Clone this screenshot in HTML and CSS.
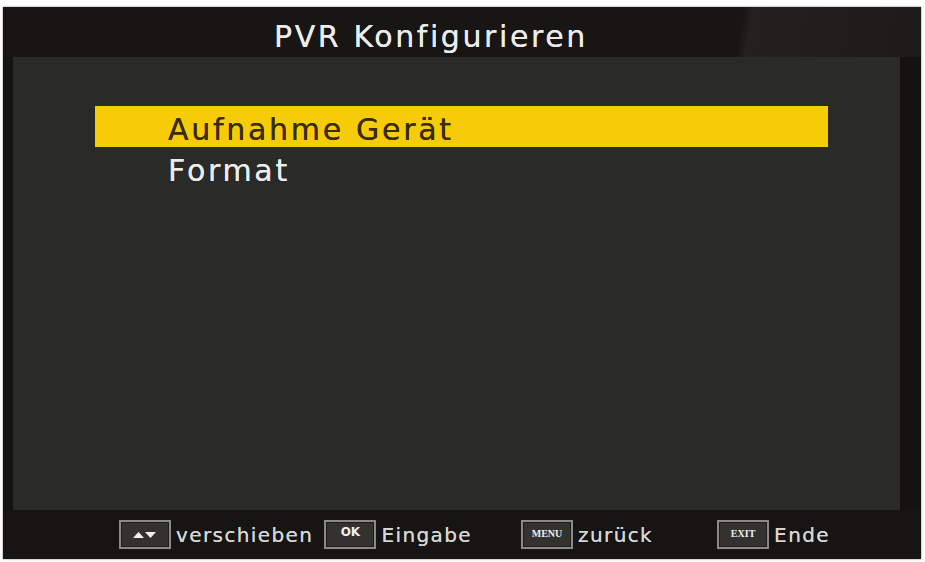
FILE: index.html
```html
<!DOCTYPE html>
<html>
<head>
<meta charset="utf-8">
<link rel="stylesheet" href="styles.css">
</head>
<body>
<div class="frame">
  <div class="header"><span class="title">PVR Konfigurieren</span></div>
  <div class="panel">
    <div class="menu">
      <div class="item selected">Aufnahme Gerät</div>
      <div class="item">Format</div>
    </div>
  </div>
  <div class="footer">
    <div class="hint h1"><span class="key"><svg width="26" height="10" viewBox="0 0 26 10"><polygon points="1,8 6.5,2 12,8" fill="#f0f0f0"/><polygon points="13,2 24,2 18.5,8" fill="#f0f0f0"/></svg></span><span class="label">verschieben</span></div>
    <div class="hint h2"><span class="key"><span class="kt">OK</span></span><span class="label">Eingabe</span></div>
    <div class="hint h3"><span class="key"><span class="kt small">MENU</span></span><span class="label">zurück</span></div>
    <div class="hint h4"><span class="key"><span class="kt small">EXIT</span></span><span class="label">Ende</span></div>
  </div>
</div>
</body>
</html>
```
FILE: styles.css
```css
html, body {
  margin: 0;
  padding: 0;
  background: #ffffff;
}
body {
  width: 925px;
  height: 562px;
  overflow: hidden;
  font-family: "DejaVu Sans", "Liberation Sans", sans-serif;
}
.frame {
  margin: 7px 0 0 3px;
  width: 918px;
  height: 552px;
  background: #151311;
  display: flex;
  flex-direction: column;
  box-shadow: 0 0 2px rgba(0,0,0,0.5);
}
.header {
  height: 50px;
  display: flex;
  align-items: center;
  justify-content: center;
  padding-right: 62px;
  background: linear-gradient(100deg, #181615 0%, #181615 80%, #222120 81%, #1c1b1a 100%);
}
.title {
  color: #ececec;
  font-size: 30px;
  letter-spacing: 2.6px;
  margin-top: 8px;
  text-shadow: 0 0 0.6px currentColor;
}
.panel {
  height: 453px;
  margin: 0 21px 0 10px;
  background: #2a2a28;
}
.menu {
  padding: 49px 0 0 82px;
}
.item {
  width: 660px;
  height: 40px;
  padding-left: 73px;
  font-size: 30px;
  line-height: 48px;
  color: #ececec;
  letter-spacing: 2.7px;
  text-shadow: 0 0 0.6px currentColor;
}
.item.selected {
  height: 41px;
  line-height: 47px;
  background: #f6cb08;
  color: #3a2c05;
  overflow: hidden;
}
.footer {
  height: 49px;
  display: flex;
  align-items: center;
  padding-left: 116px;
  background: #171514;
}
.hint {
  display: flex;
  align-items: center;
}
.h2 { margin-left: 11px; }
.h3 { margin-left: 49px; }
.h4 { margin-left: 64px; }
.key {
  box-sizing: border-box;
  width: 52px;
  height: 29px;
  border: 2px solid #8a8a88;
  background: #33322f;
  display: flex;
  align-items: center;
  justify-content: center;
  box-shadow: inset 0 0 0 1px #1e1d1b;
}
.kt {
  color: #f0f0f0;
  font-size: 12px;
  font-weight: bold;
  margin-top: -5px;
}
.kt.small {
  font-size: 10px;
  margin-top: -3px;
  font-family: "Liberation Serif", serif;
}
.label {
  color: #d6d6d4;
  font-size: 20px;
  margin-left: 5px;
  letter-spacing: 1.4px;
  text-shadow: 0 0 0.6px currentColor;
}
```
